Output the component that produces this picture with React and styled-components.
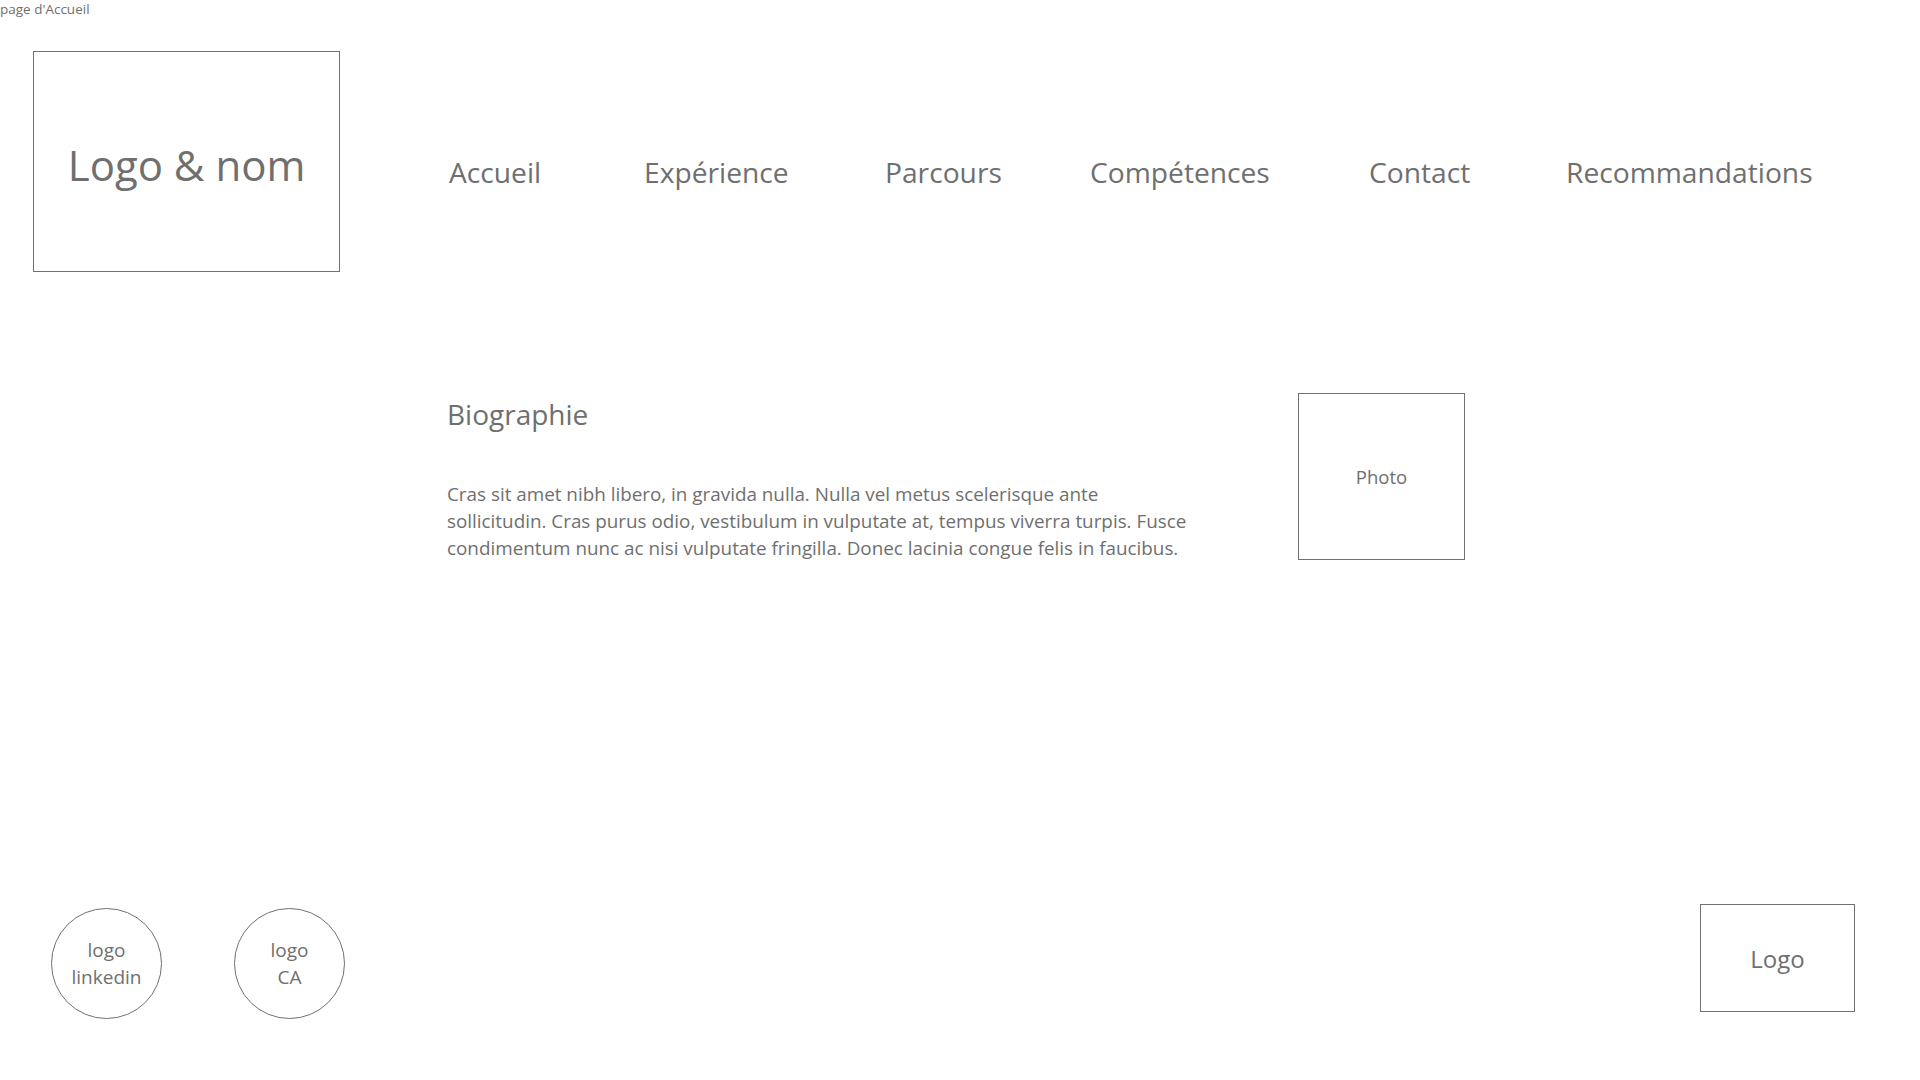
import styled, { createGlobalStyle } from 'styled-components'

const GlobalStyle = createGlobalStyle`
html, body {
    margin: 0;
    padding: 0;
    background: #ffffff;
}
body {
    font-family: "Open Sans", "Noto Sans", sans-serif;
    color: #6f6f6f;
}
`

const navItems = [
    { label: 'Accueil', width: 195 },
    { label: 'Expérience', width: 241 },
    { label: 'Parcours', width: 205 },
    { label: 'Compétences', width: 279 },
    { label: 'Contact', width: 197 },
    { label: 'Recommandations', width: 'auto' },
]

const App = () => {
    return (
        <Page>
            <GlobalStyle />
            <Caption>page d'Accueil</Caption>
            <Header>
                <LogoBox>Logo &amp; nom</LogoBox>
                <Nav>
                    {navItems.map((item) => (
                        <NavItem key={item.label} w={item.width}>{item.label}</NavItem>
                    ))}
                </Nav>
            </Header>
            <Main>
                <Bio>
                    <Title>Biographie</Title>
                    <Text>
                        Cras sit amet nibh libero, in gravida nulla. Nulla vel metus scelerisque ante<br />
                        sollicitudin. Cras purus odio, vestibulum in vulputate at, tempus viverra turpis. Fusce<br />
                        condimentum nunc ac nisi vulputate fringilla. Donec lacinia congue felis in faucibus.
                    </Text>
                </Bio>
                <Photo>Photo</Photo>
            </Main>
            <Footer>
                <Socials>
                    <Circle>logo<br />linkedin</Circle>
                    <Circle>logo<br />CA</Circle>
                </Socials>
                <SmallLogo>Logo</SmallLogo>
            </Footer>
        </Page>
    )
}
export default App

const Page = styled.div`
width: 1920px;
height: 1080px;
display: flex;
flex-direction: column;
overflow: hidden;
`
const Caption = styled.div`
font-size: 13.5px;
line-height: 19px;
height: 17px;
`
const Header = styled.header`
display: flex;
align-items: flex-start;
margin-top: 34px;
padding-left: 33px;
`
const LogoBox = styled.div`
width: 307px;
height: 221px;
box-sizing: border-box;
border: 1px solid #707070;
display: flex;
align-items: center;
justify-content: center;
font-size: 42px;
padding-top: 6px;
`
const Nav = styled.nav`
display: flex;
margin-left: 109px;
padding-top: 101px;
`
const NavItem = styled.div`
width: ${({ w }) => (w === 'auto' ? 'auto' : `${w}px`)};
font-size: 28.2px;
line-height: 40px;
white-space: nowrap;
`
const Main = styled.main`
display: grid;
grid-template-columns: 851px 167px;
margin-top: 121px;
padding-left: 447px;
`
const Bio = styled.section`
padding-top: 5px;
`
const Title = styled.h2`
margin: 0;
font-weight: 400;
font-size: 28px;
line-height: 32px;
`
const Text = styled.p`
margin: 51px 0 0;
font-size: 18.85px;
line-height: 27px;
`
const Photo = styled.div`
width: 167px;
height: 167px;
box-sizing: border-box;
border: 1px solid #707070;
display: flex;
align-items: center;
justify-content: center;
font-size: 18.5px;
`
const Footer = styled.footer`
margin-top: auto;
display: flex;
justify-content: space-between;
align-items: flex-start;
padding: 0 65px 61px 51px;
`
const Socials = styled.div`
display: flex;
gap: 72px;
margin-top: 4px;
`
const Circle = styled.div`
width: 111px;
height: 111px;
box-sizing: border-box;
border: 1px solid #707070;
border-radius: 50%;
display: flex;
align-items: center;
justify-content: center;
text-align: center;
font-size: 19px;
line-height: 27px;
`
const SmallLogo = styled.div`
width: 155px;
height: 108px;
box-sizing: border-box;
border: 1px solid #707070;
display: flex;
align-items: center;
justify-content: center;
font-size: 24px;
`
